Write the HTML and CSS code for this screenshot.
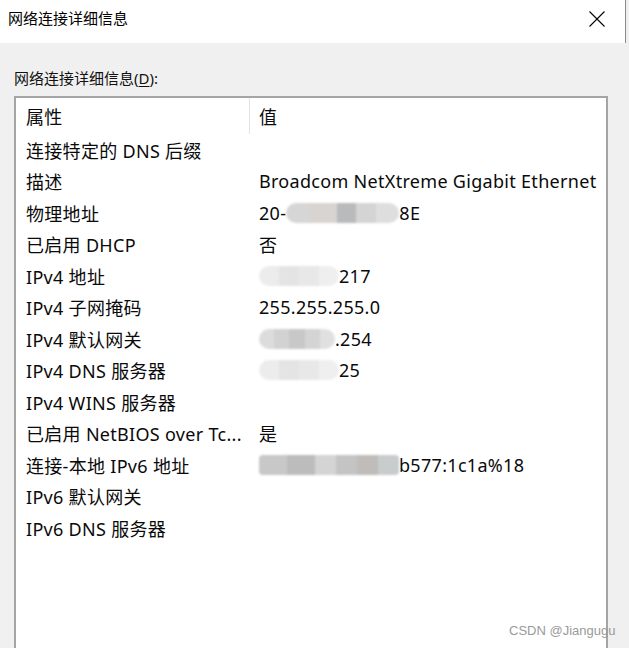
FILE: index.html
```html
<!DOCTYPE html>
<html lang="zh-CN">
<head>
<meta charset="utf-8">
<title>网络连接详细信息</title>
<link rel="stylesheet" href="styles.css">
</head>
<body>
<div class="window">
  <header class="titlebar">
    <span class="title">网络连接详细信息</span>
    <span class="close">
      <svg width="16" height="16" viewBox="0 0 16 16"><path d="M0.5 0.5 L15.5 15.5 M15.5 0.5 L0.5 15.5" stroke="#000" stroke-width="1.1" fill="none"/></svg>
    </span>
  </header>
  <main class="content">
    <div class="caption">网络连接详细信息(<u>D</u>):</div>
    <div class="listbox">
      <div class="row head"><div class="c1">属性</div><div class="c2">值</div></div>
      <div class="row"><div class="c1">连接特定的 DNS 后缀</div><div class="c2"></div></div>
      <div class="row"><div class="c1">描述</div><div class="c2">Broadcom NetXtreme Gigabit Ethernet</div></div>
      <div class="row"><div class="c1">物理地址</div><div class="c2">20-<span class="mask w-mac"></span>8E</div></div>
      <div class="row"><div class="c1">已启用 DHCP</div><div class="c2">否</div></div>
      <div class="row"><div class="c1">IPv4 地址</div><div class="c2"><span class="mask light w-ip"></span>217</div></div>
      <div class="row"><div class="c1">IPv4 子网掩码</div><div class="c2">255.255.255.0</div></div>
      <div class="row"><div class="c1">IPv4 默认网关</div><div class="c2"><span class="mask w-gw"></span>.254</div></div>
      <div class="row"><div class="c1">IPv4 DNS 服务器</div><div class="c2"><span class="mask light w-dns"></span>25</div></div>
      <div class="row"><div class="c1">IPv4 WINS 服务器</div><div class="c2"></div></div>
      <div class="row"><div class="c1">已启用 NetBIOS over Tc...</div><div class="c2">是</div></div>
      <div class="row"><div class="c1">连接-本地 IPv6 地址</div><div class="c2"><span class="mask w-v6"></span>b577:1c1a%18</div></div>
      <div class="row"><div class="c1">IPv6 默认网关</div><div class="c2"></div></div>
      <div class="row"><div class="c1">IPv6 DNS 服务器</div><div class="c2"></div></div>
    </div>
  </main>
  <div class="watermark">CSDN @Jiangugu</div>
</div>
</body>
</html>
```

FILE: styles.css
```css
* { box-sizing: border-box; }
html, body {
  margin: 0;
  padding: 0;
  width: 629px;
  height: 648px;
  overflow: hidden;
  background: #f0f0f0;
}
.window {
  position: relative;
  width: 629px;
  height: 648px;
  display: flex;
  flex-direction: column;
  font-family: "Noto Sans", "Noto Sans CJK SC", sans-serif;
  color: #000;
}
.titlebar {
  height: 43px;
  flex: none;
  background: #fff;
  display: flex;
  align-items: center;
  justify-content: space-between;
  padding: 0 20px 0 8px;
  border-right: 1px solid #8a8a8a;
  margin-right: 3px;
}
.title {
  font-size: 15px;
  line-height: 20px;
  margin-top: -7px;
}
.close {
  display: flex;
  margin-top: -6px;
}
.content {
  flex: 1;
  padding: 24px 21px 0 14px;
  display: flex;
  flex-direction: column;
  min-height: 0;
}
.caption {
  font-size: 15px;
  line-height: 22px;
  margin-bottom: 7px;
  color: #111;
}
.caption u { text-underline-offset: 2px; }
.listbox {
  flex: 1;
  background: #fff;
  border: 2px solid #a5a5a5;
  border-bottom: none;
  font-size: 18px;
  letter-spacing: 0.3px;
  color: #0a0a0a;
}
.row {
  display: grid;
  grid-template-columns: 234px 1fr;
  height: 31.5px;
  align-items: center;
  white-space: nowrap;
}
.row.head {
  height: 36px;
  align-items: stretch;
}
.row.head .c1, .row.head .c2 {
  display: flex;
  align-items: center;
}
.row.head .c1 {
  border-right: 1px solid #e3e3e3;
}
.c1 {
  padding-left: 10px;
  overflow: hidden;
}
.c2 {
  padding-left: 9px;
  display: flex;
  align-items: center;
}
.mask {
  display: inline-block;
  height: 20px;
  border-radius: 10px;
  filter: blur(0.8px);
  background: linear-gradient(90deg, #dcdcdc 0 20%, #d2d2d2 20% 40%, #c8c8c8 40% 60%, #d4d4d4 60% 80%, #e0e0e0 80% 100%);
}
.mask.light {
  background: linear-gradient(90deg, #ececec 0 25%, #e4e4e4 25% 50%, #e8e8e8 50% 75%, #efefef 75% 100%);
}
.w-mac { width: 113px; background: linear-gradient(90deg, #d6d6d6 0 20%, #d8d4d2 20% 45%, #b8babc 45% 62%, #d4d4d4 62% 80%, #dedede 80% 100%); }
.w-ip { width: 80px; }
.w-gw { width: 76px; }
.w-dns { width: 80px; background: linear-gradient(90deg, #e8e8e8 0 25%, #dadada 25% 50%, #d0d0d0 50% 75%, #dcdcdc 75% 100%); }
.w-v6 { width: 140px; border-radius: 4px; background: linear-gradient(90deg, #c8c8c8 0 20%, #bcbcbc 20% 40%, #d4d4d4 40% 55%, #c4c4c4 55% 70%, #c0bcba 70% 85%, #c8cccc 85% 100%); }
.watermark {
  position: absolute;
  left: 509px;
  top: 623px;
  font-family: "Liberation Sans", sans-serif;
  font-size: 13px;
  color: #9a9a9a;
  white-space: nowrap;
}
```
